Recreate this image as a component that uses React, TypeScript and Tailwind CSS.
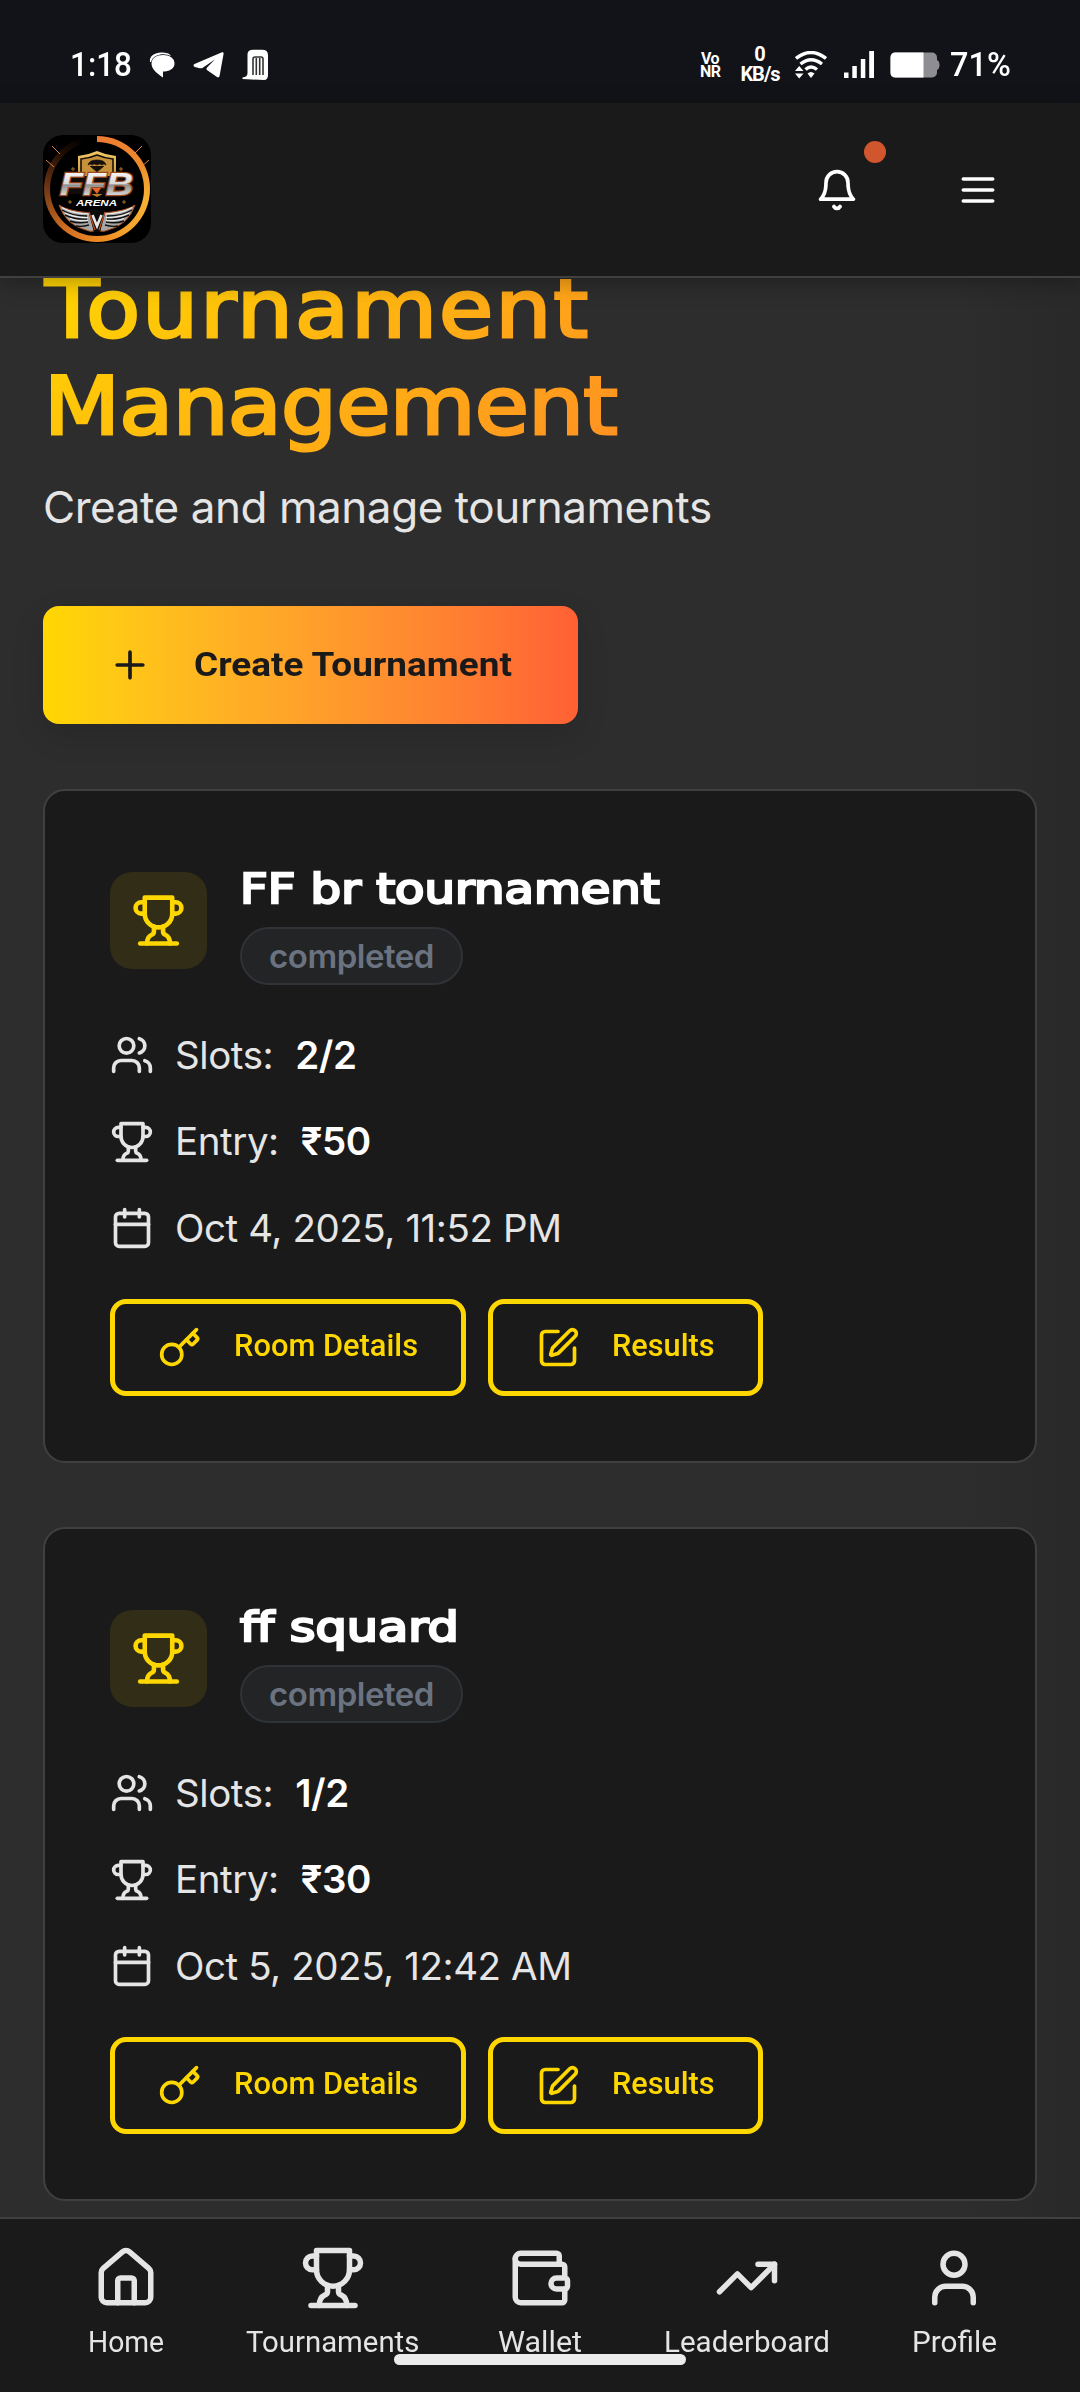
import { useLayoutEffect, useRef, type ReactNode } from "react";

/* Single-line text stretched to a fixed advance width. */
function Fit({ w, className = "", children }: { w: number; className?: string; children: ReactNode }) {
  const ref = useRef<HTMLSpanElement>(null);
  useLayoutEffect(() => {
    const el = ref.current;
    if (!el) return;
    el.style.transform = `scaleX(${w / el.offsetWidth})`;
  }, [w]);
  return (
    <span className="block shrink-0" style={{ width: w }}>
      <span ref={ref} className={`inline-block origin-left whitespace-nowrap ${className}`}>
        {children}
      </span>
    </span>
  );
}

function Icon({ className, children }: { className: string; children: ReactNode }) {
  return (
    <svg
      viewBox="0 0 24 24"
      fill="none"
      stroke="currentColor"
      strokeWidth="2"
      strokeLinecap="round"
      strokeLinejoin="round"
      className={`shrink-0 ${className}`}
    >
      {children}
    </svg>
  );
}

const trophy = (
  <>
    <path d="M6 9H4.5a2.5 2.5 0 0 1 0-5H6" />
    <path d="M18 9h1.5a2.5 2.5 0 0 0 0-5H18" />
    <path d="M4 22h16" />
    <path d="M10 14.66V17c0 .55-.47.98-.97 1.21C7.85 18.75 7 20.24 7 22" />
    <path d="M14 14.66V17c0 .55.47.98.97 1.21C16.15 18.75 17 20.24 17 22" />
    <path d="M18 2H6v7a6 6 0 0 0 12 0V2Z" />
  </>
);
const users = (
  <>
    <path d="M16 21v-2a4 4 0 0 0-4-4H6a4 4 0 0 0-4 4v2" />
    <circle cx="9" cy="7" r="4" />
    <path d="M22 21v-2a4 4 0 0 0-3-3.87" />
    <path d="M16 3.13a4 4 0 0 1 0 7.75" />
  </>
);
const calendar = (
  <>
    <path d="M8 2v4" />
    <path d="M16 2v4" />
    <rect width="18" height="18" x="3" y="4" rx="2" />
    <path d="M3 10h18" />
  </>
);
const keyIcon = (
  <>
    <path d="m15.5 7.5 2.3 2.3a1 1 0 0 0 1.4 0l2.1-2.1a1 1 0 0 0 0-1.4L19 4" />
    <path d="m21 2-9.6 9.6" />
    <circle cx="7.5" cy="15.5" r="5.5" />
  </>
);
const pen = (
  <>
    <path d="M12 3H5a2 2 0 0 0-2 2v14a2 2 0 0 0 2 2h14a2 2 0 0 0 2-2v-7" />
    <path d="M18.375 2.625a1 1 0 0 1 3 3l-9.013 9.014a2 2 0 0 1-.853.505l-2.873.84a.5.5 0 0 1-.62-.62l.84-2.873a2 2 0 0 1 .506-.852z" />
  </>
);
const house = (
  <>
    <path d="M15 21v-8a1 1 0 0 0-1-1h-4a1 1 0 0 0-1 1v8" />
    <path d="M3 10a2 2 0 0 1 .709-1.528l7-5.999a2 2 0 0 1 2.582 0l7 5.999A2 2 0 0 1 21 10v9a2 2 0 0 1-2 2H5a2 2 0 0 1-2-2z" />
  </>
);
const wallet = (
  <>
    <path d="M19 7V4a1 1 0 0 0-1-1H5a2 2 0 0 0 0 4h15a1 1 0 0 1 1 1v4h-3a2 2 0 0 0 0 4h3a1 1 0 0 0 1-1v-2a1 1 0 0 0-1-1" />
    <path d="M3 5v14a2 2 0 0 0 2 2h15a1 1 0 0 0 1-1v-4" />
  </>
);
const trending = (
  <>
    <polyline points="22 7 13.5 15.5 8.5 10.5 2 17" />
    <polyline points="16 7 22 7 22 13" />
  </>
);
const user = (
  <>
    <path d="M19 21v-2a4 4 0 0 0-4-4H9a4 4 0 0 0-4 4v2" />
    <circle cx="12" cy="7" r="4" />
  </>
);

function StatusBar() {
  return (
    <div className="flex h-[103px] items-center bg-[#121318] pt-[27px] pl-[70px] font-[Roboto,sans-serif] text-white">
      <Fit w={62} className="text-[33px] leading-[36px] font-medium">1:18</Fit>
      <svg viewBox="0 0 26 26" className="ml-[17px] h-[26px] w-[26px]" fill="#fff">
        <path d="M1 10C0 4 6 0.5 12 0.5c5 0 9 1 10 3.500C18 1.500 5 0 2 10Z" />
        <path d="M14 3C20.500 3 25.500 6 25.500 11.500C25.500 17 20 19.500 14 19.500V25.500C9 22 3 18 2.500 12C2.500 6 7.500 3 14 3Z" />
      </svg>
      <svg viewBox="0 0 32 28" className="ml-[18px] h-[28px] w-[32px]" fill="#fff">
        <path d="M1.500 13 29 1.300c1-.4 1.800.2 1.600 1.500l-4 22c-.3 1.700-1.700 2-3 1l-9.300-6.500c-1.300-1-1-2 0-3l7.500-7.800-12 8.200c-1.500 1-3 .6-8-.8-1.500-.5-1.800-2-.3-2.900Z" />
      </svg>
      <svg viewBox="0 0 27 32" className="ml-[17px] h-[32px] w-[27px]">
        <path d="M5.500 5Q6 .8 11 .8H20Q26 .8 26 6V26Q26 31 22 31L.5 30V28.500Q5.500 28 5.500 24Z" fill="#fff" />
        <path d="M11 26V10q0-2 2-2h6q2 0 2 2V26M14.300 26V9M17.700 26V9" stroke="#333" strokeWidth="1.600" fill="none" />
      </svg>
      <div className="ml-[431px] flex w-[22px] flex-col text-[16px] leading-[13px] font-bold">
        <span className="pl-px tracking-[-0.5px]">Vo</span>
        <span className="tracking-[-0.5px]">NR</span>
      </div>
      <div className="ml-[17px] -mt-[2px] flex w-[42px] flex-col items-center text-[20px] leading-[20px] font-bold">
        <span>0</span>
        <span className="tracking-[-1px]">KB/s</span>
      </div>
      <svg viewBox="0 0 32 28" className="ml-[14px] h-[28px] w-[32px]" fill="none" stroke="#fff" strokeWidth="3.400">
        <path d="M1 7.500Q16-4.500 31 7.500" />
        <path d="M5.500 13Q16 4.500 27 13" />
        <path d="M10.500 18.500Q16 13.500 22 18.500" />
        <path d="M12.500 22.500Q16 19.500 19.500 22.500L16 27Z" fill="#fff" stroke="none" />
        <path d="M0 20h8.500L4.200 15ZM0 22.500h8.500L4.200 27.500Z" fill="#fff" stroke="none" />
      </svg>
      <svg viewBox="0 0 31 28" className="ml-[17px] h-[28px] w-[31px]" fill="#fff">
        <rect x="0" y="21.500" width="4.500" height="5.500" />
        <rect x="8.300" y="15" width="4.500" height="12" />
        <rect x="16.800" y="8" width="4.500" height="19" />
        <rect x="25.200" y="0" width="4.800" height="27" />
      </svg>
      <svg viewBox="0 0 50 26" className="ml-[15px] h-[26px] w-[50px]">
        <rect x="0.500" y="0.500" width="46.500" height="25" rx="5" fill="#8e8e92" />
        <path d="M47 8q2.500 1 2.500 5t-2.500 5Z" fill="#8e8e92" />
        <path d="M5.500.5H33.500v25H5.500q-5 0-5-5V5.500q0-5 5-5Z" fill="#fff" />
      </svg>
      <span className="ml-[10px]">
        <Fit w={61} className="text-[33px] leading-[36px] font-medium">71%</Fit>
      </span>
    </div>
  );
}

const wing = (
  <>
    <path d="M16 70q8 6 32 8l3 18q-4 1-8-1-20-5-27-25Z" fill="#a6a6a6" stroke="#b3501f" strokeWidth="1" />
    <path d="M19 75q10 6 25 6M22 80q10 5 22 4M27 86q8 3 18 1M33 91q6 1 13-1" stroke="#111" strokeWidth="1.400" fill="none" />
    <path d="M19 72.500q10 6 27 6.500M22 78q10 5 23 4.500M27 83.500q8 3 18 2" stroke="#eee" strokeWidth="1.200" fill="none" />
  </>
);

function Logo() {
  return (
    <div className="relative -mt-[2px] h-[108px] w-[108px] overflow-hidden rounded-[20px] bg-black">
      <div className="absolute inset-px rounded-full bg-[conic-gradient(#ee7a33,#ee8a2e_60deg,#f8b133_100deg,#f5a52b_140deg,#ee8824_180deg,#cf6d22_220deg,#713814_270deg,#1f0e04_315deg,#000_345deg,#000)]" />
      <div className="absolute inset-[7px] rounded-full bg-black" />
      <svg viewBox="0 0 108 108" className="absolute inset-0 h-full w-full">
        <defs>
          <linearGradient id="silver" x1="0" y1="0" x2="0" y2="1">
            <stop offset=".2" stopColor="#f4f4f4" />
            <stop offset=".5" stopColor="#d8d8d8" />
            <stop offset=".52" stopColor="#8d8d8d" />
            <stop offset=".85" stopColor="#e2e2e2" />
          </linearGradient>
          <linearGradient id="gold" x1="0" y1="0" x2="0" y2="1">
            <stop offset="0" stopColor="#f0c766" />
            <stop offset="1" stopColor="#b27a24" />
          </linearGradient>
        </defs>
        <path d="M9 11l8 8M3 25l8 7M99 11l-9 9M106 25l-8 7" stroke="#e0813a" strokeWidth="1" />
        <path d="M35 21q10-1 19-5 9 4 19 5v20q-3 14-19 21-16-7-19-21Z" fill="url(#gold)" />
        <path d="M38 24q9-1 16-4 7 3 16 4v16q-3 12-16 18-13-6-16-18Z" fill="#c8923a" stroke="#17100a" strokeWidth="1.600" />
        <path d="M45 30q1-5 9-5t9 5q-2-2-4 0-2-2-5 0-3-2-5 0-2-2-4 0Zm2 1 7 6 7-6" fill="#17100a" stroke="#17100a" strokeWidth=".7" />
        <path d="M30 41h51l-4 18H26Z" fill="#120c08" />
        <g fontFamily="'Liberation Sans', sans-serif" fontWeight="bold" fontStyle="italic">
          <text x="17" y="60" fontSize="32" textLength="73" lengthAdjust="spacingAndGlyphs" fill="url(#silver)" stroke="#9b4b24" strokeWidth="2.400" paintOrder="stroke">FFB</text>
          <text x="33" y="70.500" fontSize="9.500" textLength="41" lengthAdjust="spacingAndGlyphs" fill="#fff">ARENA</text>
        </g>
        <path d="M49 53h9l-4 6Z" fill="#e8622a" />
        <path d="M25 67h4M27 65v4M79 67h4M81 65v4M28 34h4M30 32v4M76 34h4M78 32v4" stroke="#b17a2e" strokeWidth=".9" />
        {wing}
        <g transform="matrix(-1 0 0 1 108 0)">{wing}</g>
        <path d="M45 75h18l-6 22h-6Z" fill="#0a0a0a" />
        <path d="M49.500 80l4.500 11 4.500-11" stroke="#e6e6e6" strokeWidth="2.600" fill="none" />
        <path d="M46 77l6 18M62 77l-6 18" stroke="#c4501f" strokeWidth="1.200" />
      </svg>
    </div>
  );
}

function Header() {
  return (
    <header className="relative z-10 flex h-[175px] items-center justify-between border-b-2 border-[#404040] bg-[#1a1a1a] px-[43px] shadow-[0_4px_22px_rgba(0,0,0,0.3)]">
      <Logo />
      <div className="flex items-center gap-[97px] pr-[37px]">
        <div className="relative text-white">
          <Icon className="h-[44px] w-[44px]">
            <path d="M6 8a6 6 0 0 1 12 0c0 7 3 9 3 9H3s3-2 3-9" />
            <path d="M10.300 21a1.940 1.940 0 0 0 3.400 0" />
          </Icon>
          <span className="absolute -top-[27px] -right-[27px] h-[22px] w-[22px] rounded-full bg-[#d1552d]" />
        </div>
        <Icon className="h-[44px] w-[44px] text-white">
          <path d="M4 6h16M4 12h16M4 18h16" />
        </Icon>
      </div>
    </header>
  );
}

interface Tournament {
  title: string;
  titleWidth: number;
  slots: string;
  entry: string;
  date: string;
}

const tournaments: Tournament[] = [
  { title: "FF br tournament", titleWidth: 420, slots: "2/2", entry: "₹50", date: "Oct 4, 2025, 11:52 PM" },
  { title: "ff squard", titleWidth: 219, slots: "1/2", entry: "₹30", date: "Oct 5, 2025, 12:42 AM" },
];

function OutlineButton({ icon, width, children }: { icon: ReactNode; width: number; children: string }) {
  return (
    <button className="flex h-[97px] items-center gap-[32px] rounded-[16px] border-[5px] border-[#ffd700] pr-[43px] pl-[43px] text-[#ffd700]">
      <Icon className="h-[44px] w-[44px]">{icon}</Icon>
      <Fit w={width} className="mb-[3px] font-[Roboto,sans-serif] text-[31px] leading-[36px] font-medium">
        {children}
      </Fit>
    </button>
  );
}

function Card({ t }: { t: Tournament }) {
  return (
    <article className="h-[674px] rounded-[22px] border-2 border-[#404040] bg-[#1a1a1a] px-[65px] pt-[71px]">
      <div className="flex gap-[33px]">
        <div className="mt-[10px] flex h-[97px] w-[97px] items-center justify-center rounded-[22px] bg-[#312d17] text-[#ffd700]">
          <Icon className="h-[55px] w-[55px]">{trophy}</Icon>
        </div>
        <div>
          <h3 className="h-[65px] pt-[2px] text-white">
            <Fit w={t.titleWidth} className="font-['DejaVu_Sans',sans-serif] text-[41px] leading-[50px] [-webkit-text-stroke:2.4px_#fff]">
              {t.title}
            </Fit>
          </h3>
          <span className="flex h-[58px] w-[223px] items-center justify-center rounded-full border-2 border-[#2f3237] bg-[#222426] font-[Inter,sans-serif] text-[33px] leading-[50px] font-semibold tracking-[-0.015em] text-[#6b7280]">
            completed
          </span>
        </div>
      </div>
      <div className="mt-[38px] flex flex-col gap-[22px] font-[Inter,sans-serif] text-[38.5px] leading-[64.4px] tracking-[-0.011em] text-[#e5e5e5]">
        <div className="flex items-center gap-[21px]">
          <Icon className="h-[44px] w-[44px]">{users}</Icon>
          <span>Slots:</span>
          <span className="pl-px font-semibold text-white">{t.slots}</span>
        </div>
        <div className="flex items-center gap-[21px]">
          <Icon className="h-[44px] w-[44px]">{trophy}</Icon>
          <span>Entry:</span>
          <span className="pl-px font-semibold text-white">{t.entry}</span>
        </div>
        <div className="flex items-center gap-[21px]">
          <Icon className="h-[44px] w-[44px]">{calendar}</Icon>
          <span>{t.date}</span>
        </div>
      </div>
      <div className="mt-[39px] flex gap-[22px]">
        <OutlineButton icon={keyIcon} width={184}>Room Details</OutlineButton>
        <OutlineButton icon={pen} width={103}>Results</OutlineButton>
      </div>
    </article>
  );
}

const tabs = [
  { label: "Home", icon: house, width: 76 },
  { label: "Tournaments", icon: trophy, width: 173 },
  { label: "Wallet", icon: wallet, width: 84 },
  { label: "Leaderboard", icon: trending, width: 166 },
  { label: "Profile", icon: user, width: 85 },
];

export default function App() {
  return (
    <div className="flex h-[2392px] w-[1080px] flex-col overflow-hidden bg-[linear-gradient(to_right,#2d2d2d_960px,#292929)]">
      <StatusBar />
      <Header />
      <main className="-mt-[17px] flex h-[1956px] shrink-0 flex-col overflow-hidden px-[43px]">
        <h1 className="w-[904px] origin-left scale-x-110 bg-[linear-gradient(135deg,#ffd700,#ff6b35)] bg-clip-text pl-px font-['DejaVu_Sans',sans-serif] text-[80px] leading-[97px] text-transparent [-webkit-text-stroke:3px_transparent]">
          <span className="block pl-px tracking-[2px]">Tournament</span>
          <span className="block tracking-[-0.6px]">Management</span>
        </h1>
        <p className="mt-[17px] font-[Inter,sans-serif] text-[44px] leading-[70px] tracking-[-0.01em] text-[#e5e5e5]">
          Create and manage tournaments
        </p>
        <button className="mt-[64px] flex h-[118px] w-[535px] items-center gap-[29px] rounded-[16px] bg-linear-to-r from-[#ffd700] to-[#ff6035] pl-[65px] text-[#1a1a1a] shadow-[0_11px_33px_rgba(0,0,0,0.12)]">
          <Icon className="h-[44px] w-[44px]">
            <path d="M5 12h14M12 5v14" />
          </Icon>
          <Fit w={318} className="mb-[3px] font-[Roboto,sans-serif] text-[34px] leading-[40px] font-bold">
            Create Tournament
          </Fit>
        </button>
        <div className="mt-[65px] flex flex-col gap-[64px]">
          {tournaments.map((t) => (
            <Card key={t.title} t={t} />
          ))}
        </div>
      </main>
      <nav className="relative flex h-[175px] shrink-0 border-t-2 border-[#404040] bg-[#1a1a1a] px-[22px] pt-[26px] text-[#e5e5e5]">
        {tabs.map((tab) => (
          <div key={tab.label} className="flex flex-1 flex-col items-center">
            <Icon className="h-[66px] w-[66px]">{tab.icon}</Icon>
            <span className="mt-[12px]">
              <Fit w={tab.width} className="font-[Roboto,sans-serif] text-[29px] leading-[38px]">{tab.label}</Fit>
            </span>
          </div>
        ))}
        <div className="absolute top-[135px] left-[394px] h-[11px] w-[292px] rounded-full bg-[#ececec]" />
      </nav>
    </div>
  );
}
